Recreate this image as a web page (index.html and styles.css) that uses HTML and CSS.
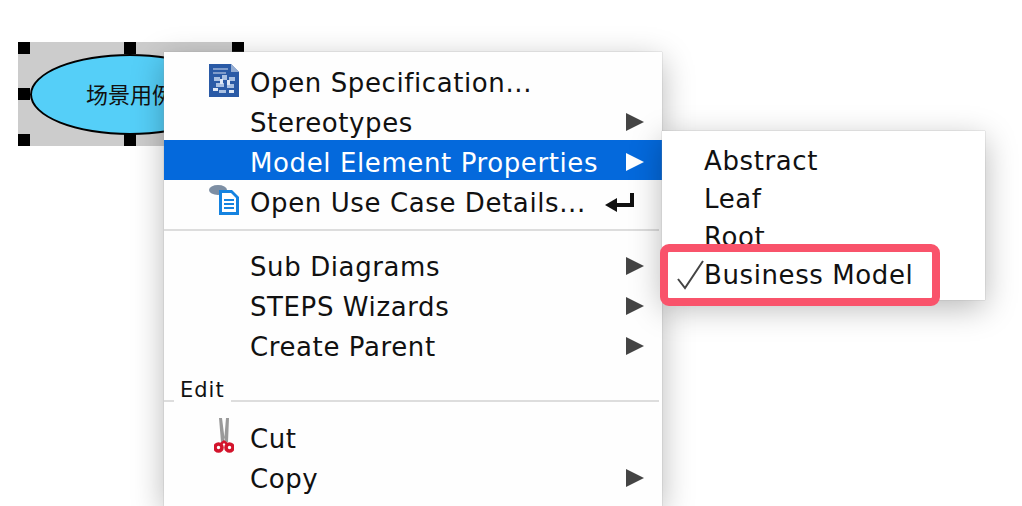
FILE: index.html
```html
<!DOCTYPE html>
<html lang="zh">
<head>
  <meta charset="UTF-8" />
  <title>Use case context menu</title>
  <link rel="stylesheet" href="styles.css">
</head>
<body>
  <div class="shape">
    <div class="oval">场景用例</div>
    <i class="handle h-tl"></i><i class="handle h-tc"></i><i class="handle h-tr"></i>
    <i class="handle h-ml"></i>
    <i class="handle h-bl"></i><i class="handle h-bc"></i><i class="handle h-br"></i>
  </div>

  <div class="menu">
    <div class="row low">
      <svg class="icon spec" viewBox="0 0 30 33">
        <path d="M0 0h22l8 8v25H0z" fill="#2a5aa6"/>
        <path d="M22 0l8 8h-8z" fill="#93acd2"/>
        <path d="M4 4h15v2H4zM4 8h13v2H4z" fill="#7f9ccb"/>
        <path d="M5 13h6v4H5zM13 11h5v5h-5zM20 13h6v4h-6zM7 19h8v4H7zM18 20h7v4h-7zM10 26h7v3h-7z" fill="#a9c0e2"/>
        <path d="M11 15h3v5h-3zM18 16h3v5h-3zM4 24h5v3H4zM20 26h5v3h-5z" fill="#dfe8f5"/>
      </svg>
      <span class="label">Open Specification...</span>
    </div>
    <div class="row low">
      <span class="label">Stereotypes</span><span class="arrow"></span>
    </div>
    <div class="row low active">
      <span class="label">Model Element Properties</span><span class="arrow"></span>
    </div>
    <div class="row low">
      <svg class="icon" viewBox="0 0 30 32">
        <ellipse cx="9" cy="7" rx="9" ry="5" fill="#7d8ea3"/>
        <path d="M10 7h13l7 7v18H10z" fill="#1583e0"/>
        <path d="M13 10h9l5 5v14H13z" fill="#fff"/>
        <path d="M15 16h10v2H15zM15 20h10v2H15zM15 24h10v2H15z" fill="#1583e0"/>
      </svg>
      <span class="label">Open Use Case Details...</span>
      <svg class="enter" viewBox="0 0 30 20">
        <path d="M27 1v12H10" fill="none" stroke="#111" stroke-width="4"/>
        <path d="M0 13l12-7v14z" fill="#111"/>
      </svg>
    </div>
    <div class="sep"></div>
    <div class="row">
      <span class="label">Sub Diagrams</span><span class="arrow"></span>
    </div>
    <div class="row">
      <span class="label">STEPS Wizards</span><span class="arrow"></span>
    </div>
    <div class="row">
      <span class="label">Create Parent</span><span class="arrow"></span>
    </div>
    <div class="group"><span>Edit</span></div>
    <div class="row">
      <svg class="icon cut" viewBox="0 0 20 36">
        <path d="M5 0h3l3 24H7zM15 0h-3l-2 24h4z" fill="#9a9a9a"/>
        <circle cx="4.5" cy="29.5" r="3.5" fill="none" stroke="#d3142c" stroke-width="3.6"/>
        <circle cx="15.5" cy="29.5" r="3.5" fill="none" stroke="#d3142c" stroke-width="3.6"/>
        <path d="M6 25l4-3 4 3-2 2-2-2-2 2z" fill="#d3142c"/>
      </svg>
      <span class="label">Cut</span>
    </div>
    <div class="row">
      <span class="label">Copy</span><span class="arrow"></span>
    </div>
  </div>

  <div class="submenu">
    <div class="sub-row">Abstract</div>
    <div class="sub-row">Leaf</div>
    <div class="sub-row">Root</div>
  </div>

  <div class="callout">
    <svg class="check" viewBox="0 0 28 30">
      <path d="M2 19l7 9L27 1" fill="none" stroke="#444" stroke-width="2"/>
    </svg>
    <span class="callout-text">Business Model</span>
  </div>
</body>
</html>
```

FILE: styles.css
```css
html, body { height: 100%; }
body { margin: 0; background: #fff; color: #111; font-family: "DejaVu Sans", sans-serif; overflow: hidden; position: relative; }

.shape { position: absolute; left: 18px; top: 42px; width: 226px; height: 104px; background: #ccc; }
.oval { position: absolute; left: 12px; top: 12px; width: 200px; height: 81px; box-sizing: border-box; border: 2px solid #000; border-radius: 50%; background: #55cff8; font: 22px/74px "Noto Sans CJK SC", sans-serif; text-align: center; color: #111; }
.handle { position: absolute; width: 12px; height: 12px; background: #000; }
.h-tl { left: 0; top: 0; }
.h-tc { left: 106px; top: 0; }
.h-tr { left: 214px; top: 0; }
.h-ml { left: 0; top: 46px; }
.h-bl { left: 0; top: 92px; }
.h-bc { left: 106px; top: 92px; }
.h-br { left: 214px; top: 92px; }

.menu { position: absolute; left: 164px; top: 52px; width: 498px; height: 454px; box-sizing: border-box; padding-top: 8px; background: #fefefe; box-shadow: 0 0 1px #999, 0 8px 30px rgba(0, 0, 0, 0.28); }
.row { position: relative; display: flex; align-items: center; height: 40px; box-sizing: border-box; padding-left: 86px; font-size: 26px; letter-spacing: 0.6px; }
.row.low { padding-top: 4px; }
.row .label { flex: 1; padding-top: 2px; }
.row.active { background: #0469dc; color: #fff; }
.arrow { width: 0; height: 0; margin-right: 18px; border-left: 18px solid #444; border-top: 9px solid transparent; border-bottom: 9px solid transparent; }
.active .arrow { border-left-color: #fff; }
.icon { position: absolute; left: 45px; top: 3px; width: 30px; height: 32px; }
.icon.spec { top: 4px; height: 33px; }
.icon.cut { left: 50px; top: 0; width: 20px; height: 36px; }
.enter { width: 30px; height: 20px; margin-right: 27px; }
.sep { height: 2px; margin: 9px 3px 15px 0; background: #ddd; }

.group { height: 22px; margin: 12px 3px 16px 0; border-bottom: 2px solid #ddd; font-size: 21px; letter-spacing: 1px; line-height: 24px; }
.group span { display: inline-block; height: 24px; margin-left: 10px; padding: 0 6px; background: #fefefe; }

.submenu { position: absolute; left: 662px; top: 131px; width: 323px; height: 169px; box-sizing: border-box; padding-top: 11px; background: #fff; box-shadow: 0 0 1px #999, 0 8px 30px rgba(0, 0, 0, 0.28); }
.sub-row { height: 38px; padding-left: 42px; font-size: 26px; letter-spacing: 0.6px; line-height: 38px; }

.callout { position: absolute; left: 660px; top: 244px; width: 280px; height: 62px; box-sizing: border-box; display: flex; align-items: center; border: 8px solid #f9536b; border-radius: 9px; background: #fff; font-size: 26px; letter-spacing: 0.6px; }
.check { width: 28px; height: 30px; margin-left: 8px; }
.callout-text { padding-bottom: 1px; }
```
